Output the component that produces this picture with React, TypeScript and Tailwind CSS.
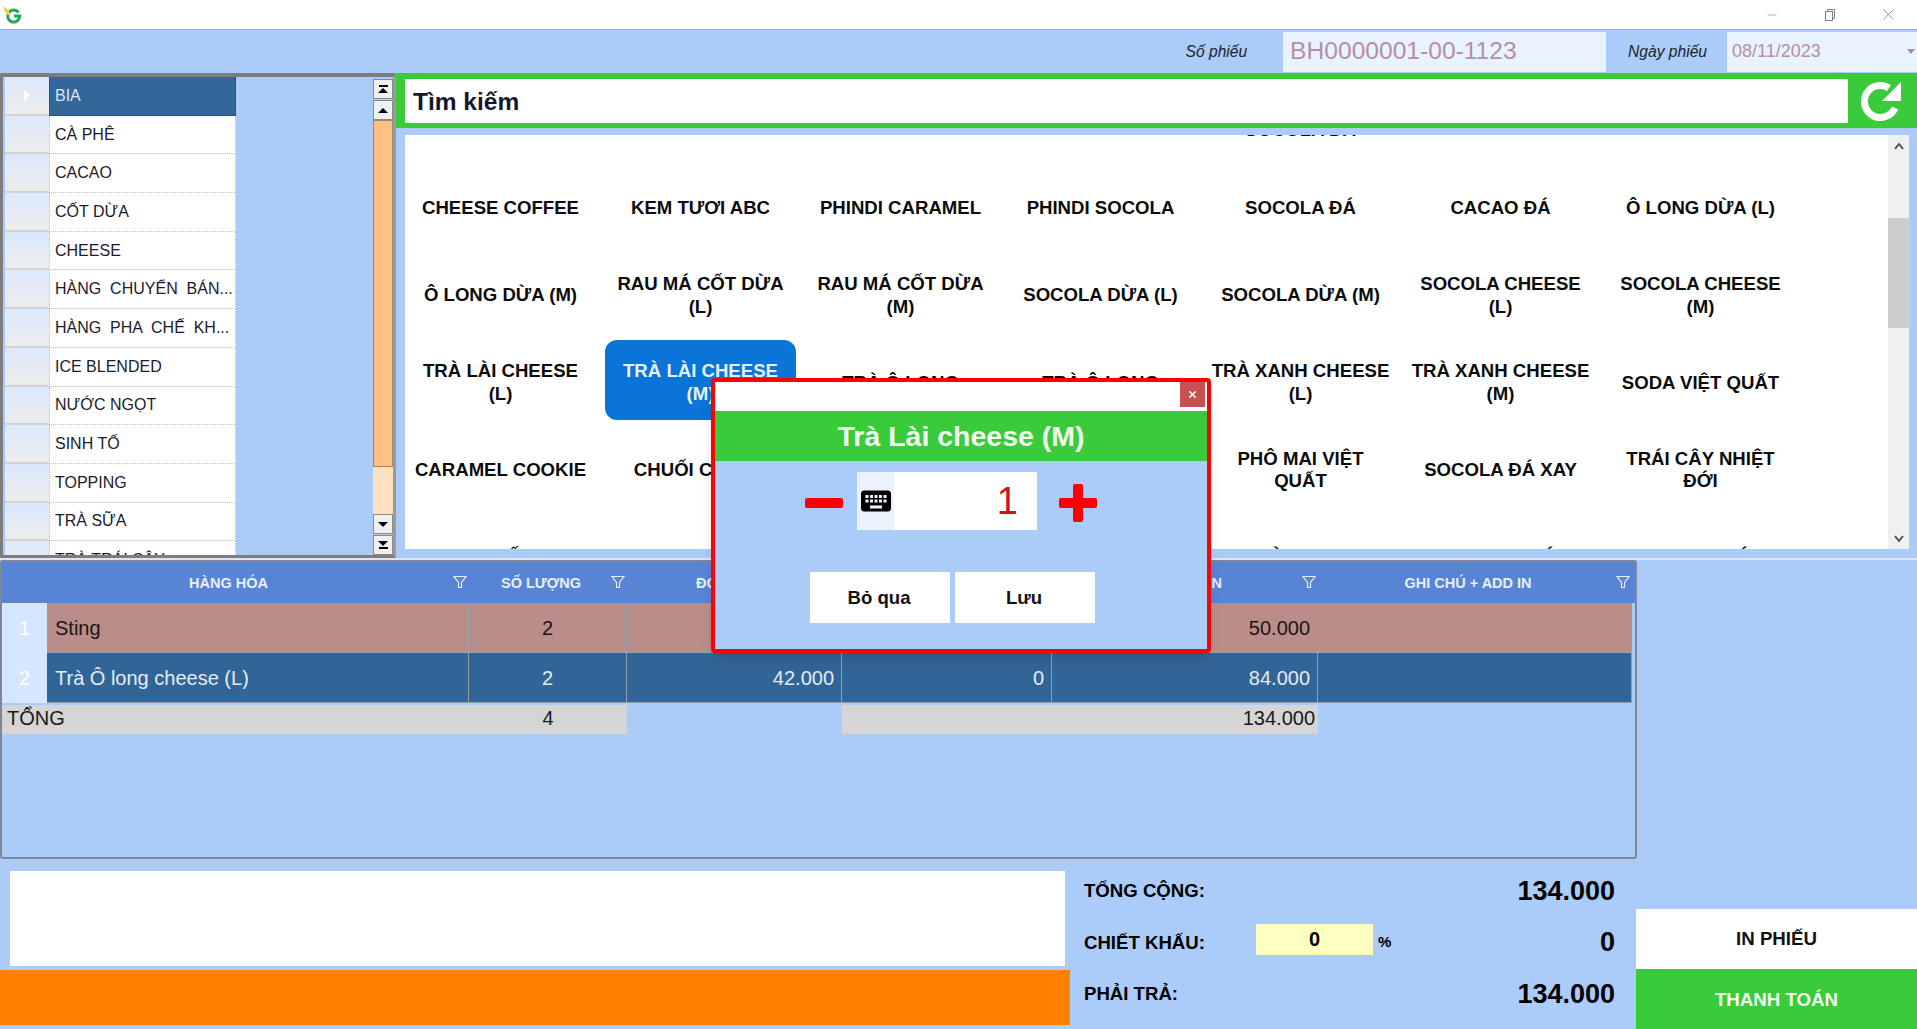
import { Minus, X } from "lucide-react";
import { MdKeyboard } from "react-icons/md";

const categories = [
  "BIA",
  "CÀ PHÊ",
  "CACAO",
  "CỐT DỪA",
  "CHEESE",
  "HÀNG  CHUYỂN  BÁN...",
  "HÀNG  PHA  CHẾ  KH...",
  "ICE BLENDED",
  "NƯỚC NGỌT",
  "SINH TỐ",
  "TOPPING",
  "TRÀ SỮA",
  "TRÀ TRÁI CÂY",
];

const products = [
  "", "", "", "", "CACAO\nSOCOLA ĐÁ", "", "",
  "CHEESE COFFEE", "KEM TƯƠI ABC", "PHINDI CARAMEL", "PHINDI SOCOLA", "SOCOLA ĐÁ", "CACAO ĐÁ", "Ô LONG DỪA (L)",
  "Ô LONG DỪA (M)", "RAU MÁ CỐT DỪA (L)", "RAU MÁ CỐT DỪA (M)", "SOCOLA DỪA (L)", "SOCOLA DỪA (M)", "SOCOLA CHEESE (L)", "SOCOLA CHEESE (M)",
  "TRÀ LÀI CHEESE (L)", "TRÀ LÀI CHEESE (M)", "TRÀ Ô LONG", "TRÀ Ô LONG", "TRÀ XANH CHEESE (L)", "TRÀ XANH CHEESE (M)", "SODA VIỆT QUẤT",
  "CARAMEL COOKIE", "CHUỐI CACAO", "", "", "PHÔ MAI VIỆT QUẤT", "SOCOLA ĐÁ XAY", "TRÁI CÂY NHIỆT ĐỚI",
  "SINH TỐ BƠ", "", "", "", "TRÀ CHANH", "SOCOLA ĐÁ", "CHANH ĐÁ",
];

function Logo() {
  return (
    <svg width="22" height="22" viewBox="0 0 22 22">
      <path d="M16.5 8.5 A6 6 0 1 0 17.5 13.5 L17.5 12 L12 12" fill="none" stroke="#1fa855" strokeWidth="3" />
      <path d="M1 2 L6 5.5 L9 11 L5.5 11 L3 7.5 Z" fill="#f4cf38" />
    </svg>
  );
}

function FunnelIcon() {
  return (
    <svg width="14" height="14" viewBox="0 0 14 14" fill="none" stroke="#e9f0fc" strokeWidth="1.2">
      <path d="M1 1.5 H13 L8.5 7.5 V12.5 H5.5 V7.5 Z" />
    </svg>
  );
}

function ScrollBtn({ kind }: { kind: "first" | "up" | "down" | "last" }) {
  return (
    <div className="h-[20px] w-[20px] border border-[#8a8a8a] bg-[#f0f0f0] flex flex-col items-center justify-center">
      {kind === "first" && <div className="w-[9px] h-[2px] bg-black mb-[1px]" />}
      {(kind === "first" || kind === "up") && (
        <div className="w-0 h-0 border-x-[5px] border-x-transparent border-b-[5px] border-b-black" />
      )}
      {(kind === "last" || kind === "down") && (
        <div className="w-0 h-0 border-x-[5px] border-x-transparent border-t-[5px] border-t-black" />
      )}
      {kind === "last" && <div className="w-[9px] h-[2px] bg-black mt-[1px]" />}
    </div>
  );
}

function CategoryPanel() {
  return (
    <div className="w-[396px] h-full border-[3px] border-t-[4px] border-[#7d7d7d] border-r-[#9a9a9a] rounded-[2px] flex overflow-hidden">
      <div className="w-[370px] pl-[2px] overflow-hidden">
        {categories.map((c, i) => (
          <div key={c} className="flex h-[38.7px] w-[231px]">
            <div className="w-[44px] shrink-0 bg-gradient-to-b from-[#dbe8fd] to-[#ededed] border-b-2 border-[#d2d2d2] flex items-center justify-center">
              {i === 0 && (
                <div className="w-0 h-0 border-y-[6px] border-y-transparent border-l-[6px] border-l-white" />
              )}
            </div>
            <div
              className={
                "flex-1 min-w-0 pl-[5px] flex items-center text-[16px] whitespace-pre border-b border-x border-dotted " +
                (i === 0
                  ? "bg-[#336699] text-[#dce6f2] border-[#1f3f60]"
                  : "bg-white text-[#1b1b2b] border-[#bdbdbd]")
              }
            >
              {c}
            </div>
          </div>
        ))}
      </div>
      <div className="ml-[1px] w-[20px] pt-[2px] flex flex-col gap-[1px]">
        <ScrollBtn kind="first" />
        <ScrollBtn kind="up" />
        <div className="flex-1 -mt-[1px] -mb-[1px] flex flex-col">
          <div className="h-[347px] bg-[#ffbf80] border border-[#9a8a76]" />
          <div className="flex-1 bg-[#ffe0c0]" />
        </div>
        <ScrollBtn kind="down" />
        <ScrollBtn kind="last" />
      </div>
    </div>
  );
}

function RefreshIcon() {
  return (
    <svg width="46" height="46" viewBox="0 0 46 46">
      <path d="M37 30 A16 16 0 1 1 31 10" fill="none" stroke="white" strokeWidth="7" />
      <path d="M43 4 V23 H24 Z" fill="white" />
    </svg>
  );
}

function ProductPanel() {
  return (
    <div className="flex-1 min-w-0 flex flex-col">
      <div className="h-[55px] bg-[#39cb39] flex items-center pl-[9px]">
        <div className="w-[1443px] h-[44px] bg-white flex items-center pl-[8px] pt-[3px] text-[24.5px] font-bold text-[#151530]">
          Tìm kiếm
        </div>
        <div className="flex-1 flex items-center justify-center pr-[3px]">
          <RefreshIcon />
        </div>
      </div>
      <div className="ml-[9px] mr-[8px] mt-[7px] h-[414px] bg-white flex overflow-hidden">
        <div className="flex-1 min-w-0 overflow-hidden">
          <div className="-mt-[57px] grid grid-cols-[repeat(7,191px)] gap-x-[9px] gap-y-[7.3px]">
            {products.map((p, i) => (
              <div
                key={i}
                className={
                  "h-[80px] px-[5px] flex items-center justify-center text-center whitespace-pre-line font-bold text-[18.6px] leading-[22.5px] " +
                  (i === 4 ? "pt-[2px] " : "pt-[6px] ") +
                  (p === "TRÀ LÀI CHEESE (M)"
                    ? "bg-[#0a74d8] rounded-[12px] text-[#e8f1fb]"
                    : "text-[#0b0b0b]")
                }
              >
                {p}
              </div>
            ))}
          </div>
        </div>
        <div className="w-[21px] h-full bg-[#f0f0f0] flex flex-col items-center">
          <div className="h-[21px] flex items-center justify-center">
            <svg width="10" height="8" viewBox="0 0 10 8" fill="none" stroke="#505050" strokeWidth="2">
              <path d="M1 7 L5 2 L9 7" />
            </svg>
          </div>
          <div className="mt-[62px] w-full h-[110px] bg-[#cdcdcd]" />
          <div className="flex-1" />
          <div className="h-[21px] flex items-center justify-center">
            <svg width="10" height="8" viewBox="0 0 10 8" fill="none" stroke="#505050" strokeWidth="2">
              <path d="M1 1 L5 6 L9 1" />
            </svg>
          </div>
        </div>
      </div>
    </div>
  );
}

const colWidths = ["w-[422px]", "w-[158px]", "w-[215px]", "w-[210px]", "w-[266px]", "w-[314px]"];

function OrderTable() {
  const headers = ["HÀNG HÓA", "SỐ LƯỢNG", "ĐƠN GIÁ", "CHIẾT KHẤU", "THÀNH TIỀN", "GHI CHÚ + ADD IN"];
  const rows = [
    { cells: ["Sting", "2", "25.000", "0", "50.000", ""], cls: "bg-[#b98d8a] text-[#1d1414]" },
    { cells: ["Trà Ô long cheese (L)", "2", "42.000", "0", "84.000", ""], cls: "bg-[#326597] text-[#e3ebf4]" },
  ];
  return (
    <div className="w-[1637px] h-[299px] border-2 border-[#7f8794] rounded-[3px] overflow-hidden">
      <div className="h-[41px] bg-[#5884d5] flex text-[14.5px] font-bold text-[#e9f0fc]">
        {headers.map((h, i) => (
          <div
            key={h}
            className={
              (i === 0 ? "w-[467px]" : colWidths[i]) + " relative flex items-center justify-center pr-[14px] pt-[2px]"
            }
          >
            {h}
            <div className="absolute right-[2px] top-[13px]">
              <FunnelIcon />
            </div>
          </div>
        ))}
      </div>
      {rows.map((r, ri) => (
        <div key={ri} className="h-[50px] flex">
          <div className="w-[45px] bg-[#d6e6fe] flex items-center justify-center text-[20px] text-white">{ri + 1}</div>
          {r.cells.map((c, i) => (
            <div
              key={i}
              className={
                colWidths[i] +
                " " +
                r.cls +
                " flex items-center text-[20px] border-r border-b border-[#97a0ad] " +
                (i === 0 ? "justify-start pl-[8px]" : i === 1 ? "justify-center" : "justify-end pr-[7px]")
              }
            >
              {c}
            </div>
          ))}
        </div>
      ))}
      <div className="mt-[2px] h-[29px] flex text-[20px] text-[#1a1a1a]">
        <div className="w-[467px] bg-[#d5d5d5] pl-[5px] pb-[3px] flex items-center">TỔNG</div>
        <div className="w-[158px] bg-[#d5d5d5] pb-[3px] flex items-center justify-center">4</div>
        <div className="w-[215px]" />
        <div className="w-[476px] bg-[#d5d5d5] pb-[3px] flex items-center justify-end pr-[3px]">134.000</div>
      </div>
    </div>
  );
}

function Totals() {
  return (
    <div className="flex-1 pl-[14px] pr-[21px] pt-[6px] flex flex-col">
      <div className="h-[52px] flex items-center justify-between">
        <span className="text-[18.6px] font-bold">TỔNG CỘNG:</span>
        <span className="text-[27px] font-bold">134.000</span>
      </div>
      <div className="h-[51px] flex items-center">
        <span className="w-[172px] text-[18.6px] font-bold">CHIẾT KHẤU:</span>
        <div className="w-[117px] h-[31px] -mt-[7px] bg-[#ffffc0] flex items-center justify-center font-bold text-[20px]">
          0
        </div>
        <span className="ml-[5px] text-[15px] font-bold">%</span>
        <span className="ml-auto text-[27px] font-bold">0</span>
      </div>
      <div className="h-[52px] flex items-center justify-between">
        <span className="text-[18.6px] font-bold">PHẢI TRẢ:</span>
        <span className="text-[27px] font-bold">134.000</span>
      </div>
    </div>
  );
}

function QuantityDialog() {
  return (
    <div className="absolute left-[711px] top-[378px] w-[500px] h-[275px] border-[4px] border-[#ff0000] rounded-[4px] bg-[#abcbf8] shadow-lg">
      <div className="h-[29px] bg-white flex justify-end">
        <div className="w-[25px] h-[25px] mr-[2px] bg-[#c75050] flex items-center justify-center text-white">
          <X size={11} strokeWidth={3.5} />
        </div>
      </div>
      <div className="h-[50px] bg-[#39cb39] pt-[1px] flex items-center justify-center text-[28.5px] font-bold text-[#f2fbf2]">
        Trà Lài cheese (M)
      </div>
      <div className="mt-[11px] flex items-center pl-[90px]">
        <div className="w-[38px] h-[10px] rounded-[2px] bg-[#ff0000] mt-[4px]" />
        <div className="ml-[14px] w-[180px] h-[58px] bg-white flex items-center">
          <div className="w-[37px] h-full bg-[#eaf3fd] flex items-center justify-center">
            <MdKeyboard size={36} color="#000" />
          </div>
          <div className="flex-1 text-right pr-[19px] text-[38px] text-[#cc1122]">1</div>
        </div>
        <div className="ml-[22px] w-[38px] h-[38px] mt-[4px] relative">
          <div className="absolute left-0 top-[14px] w-[38px] h-[10px] rounded-[2px] bg-[#ff0000]" />
          <div className="absolute left-[14px] top-0 w-[10px] h-[38px] rounded-[2px] bg-[#ff0000]" />
        </div>
      </div>
      <div className="mt-[42px] pl-[95px] flex gap-[5px] text-[18.6px] font-bold text-[#111]">
        <div className="w-[140px] h-[51px] bg-white flex items-center justify-center pr-[2px]">Bỏ qua</div>
        <div className="w-[140px] h-[51px] bg-white flex items-center justify-center pr-[2px]">Lưu</div>
      </div>
    </div>
  );
}

export default function App() {
  return (
    <div className="relative w-[1917px] h-[1029px] overflow-hidden bg-[#abcbf8] text-black font-['Liberation_Sans',Arial,sans-serif]">
      {/* title bar */}
      <div className="h-[29px] bg-white flex items-center pl-[2px]">
        <Logo />
        <div className="ml-auto flex items-center text-[#808080]">
          <div className="w-[58px] flex justify-center">
            <Minus size={14} strokeWidth={1} />
          </div>
          <div className="w-[58px] flex justify-center">
            <svg width="12" height="12" viewBox="0 0 12 12" fill="none" stroke="currentColor" strokeWidth="1">
              <rect x="1.5" y="2.5" width="7" height="9" />
              <path d="M3.5 2.5 V0.5 H10.5 V9.5 H8.5" />
            </svg>
          </div>
          <div className="w-[58px] flex justify-center">
            <X size={19} strokeWidth={1} />
          </div>
        </div>
      </div>

      {/* invoice header */}
      <div className="h-[44px] border-t border-[#8ca8dc] flex items-center justify-end">
        <span className="mr-[36px] text-[15.6px] italic text-[#20242c]">Số phiếu</span>
        <div className="w-[323px] h-[40px] mr-[22px] bg-[#e9f3fd] flex items-center pl-[7px] text-[24.6px] text-[#b58fa3]">
          BH0000001-00-1123
        </div>
        <span className="mr-[20px] text-[15.6px] italic text-[#20242c]">Ngày phiếu</span>
        <div className="w-[190px] h-[40px] bg-[#e9f3fd] flex items-center justify-between pl-[5px] pr-[2px] text-[18px] text-[#b58fa3]">
          08/11/2023
          <div className="w-0 h-0 border-x-[4px] border-x-transparent border-t-[5px] border-t-[#a98c9a]" />
        </div>
      </div>

      {/* categories and products */}
      <div className="h-[487px] flex border-b-2 border-[#dfe6f0]">
        <CategoryPanel />
        <ProductPanel />
      </div>

      <OrderTable />

      {/* bottom */}
      <div className="h-[170px] flex">
        <div className="w-[1070px] flex flex-col">
          <div className="ml-[10px] mr-[5px] mt-[12px] h-[95px] bg-white" />
          <div className="mt-[4px] h-[55px] bg-[#ff8000]" />
        </div>
        <Totals />
        <div className="w-[281px] pt-[50px] flex flex-col">
          <div className="h-[61px] bg-white flex items-center justify-center text-[18.7px] font-bold text-[#111]">
            IN PHIẾU
          </div>
          <div className="h-[60px] bg-[#39cb39] pt-[2px] flex items-center justify-center text-[18.7px] font-bold text-[#f2fbf2]">
            THANH TOÁN
          </div>
        </div>
      </div>

      <QuantityDialog />
    </div>
  );
}
